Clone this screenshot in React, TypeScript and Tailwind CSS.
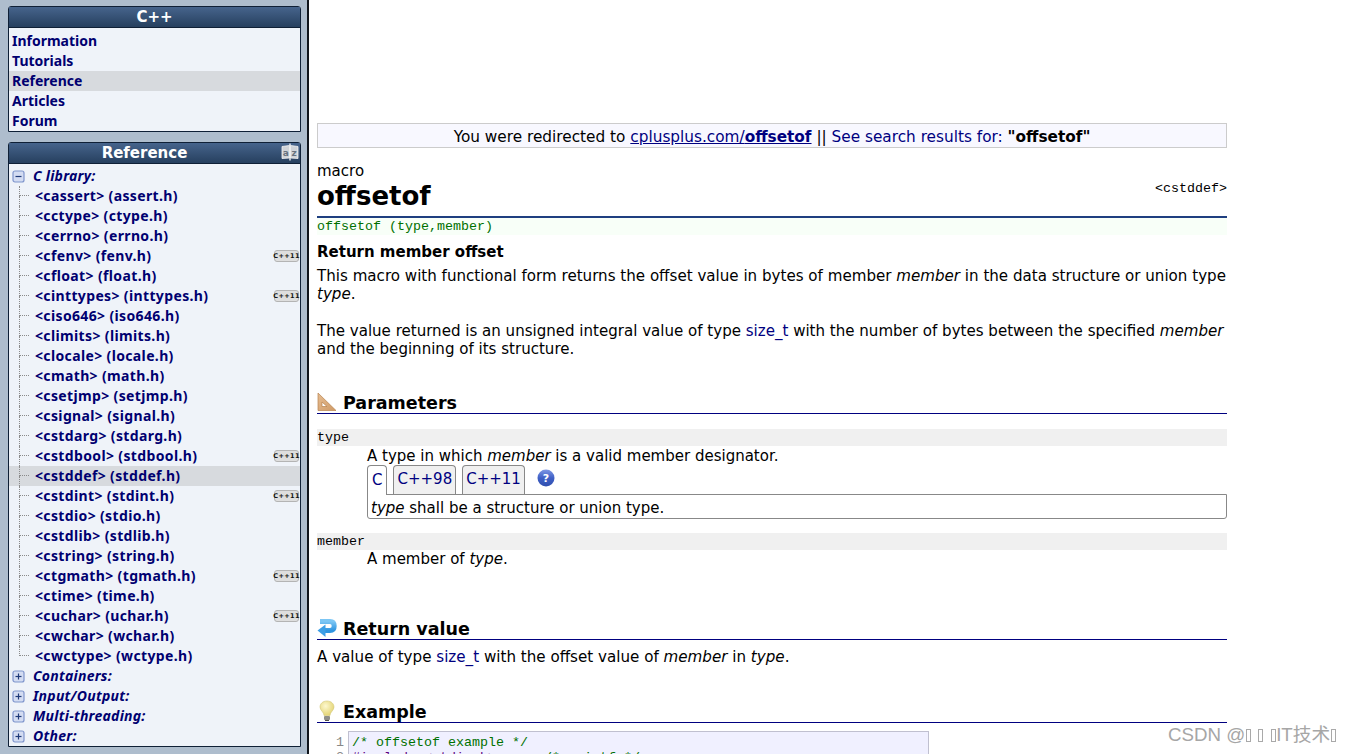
import React from "react";

const libs = [
  ["<cassert> (assert.h)", 0],
  ["<cctype> (ctype.h)", 0],
  ["<cerrno> (errno.h)", 0],
  ["<cfenv> (fenv.h)", 1],
  ["<cfloat> (float.h)", 0],
  ["<cinttypes> (inttypes.h)", 1],
  ["<ciso646> (iso646.h)", 0],
  ["<climits> (limits.h)", 0],
  ["<clocale> (locale.h)", 0],
  ["<cmath> (math.h)", 0],
  ["<csetjmp> (setjmp.h)", 0],
  ["<csignal> (signal.h)", 0],
  ["<cstdarg> (stdarg.h)", 0],
  ["<cstdbool> (stdbool.h)", 1],
  ["<cstddef> (stddef.h)", 0],
  ["<cstdint> (stdint.h)", 1],
  ["<cstdio> (stdio.h)", 0],
  ["<cstdlib> (stdlib.h)", 0],
  ["<cstring> (string.h)", 0],
  ["<ctgmath> (tgmath.h)", 1],
  ["<ctime> (time.h)", 0],
  ["<cuchar> (uchar.h)", 1],
  ["<cwchar> (wchar.h)", 0],
  ["<cwctype> (wctype.h)", 0],
] as const;

const sans = "font-['DejaVu_Sans',sans-serif]";
const side = "font-['Noto_Sans',sans-serif]";
const mono = "font-['Liberation_Mono',monospace]";

function TreeBox({ open }: { open?: boolean }) {
  return (
    <svg width="13" height="13" viewBox="0 0 13 13" className="shrink-0">
      <rect x="1" y="1" width="11" height="11" rx="2" fill="#d3dcf2" stroke="#7f95cc" strokeWidth="1.2" />
      <path d="M3.5 6.5h6" stroke="#1e3a78" strokeWidth="1.2" />
      {!open && <path d="M6.5 3.5v6" stroke="#1e3a78" strokeWidth="1.2" />}
    </svg>
  );
}

function Badge() {
  return (
    <span className="flex h-[12px] w-[25px] items-center justify-center rounded-[3px] border border-[#b4b4b4] bg-[#dedede] font-['DejaVu_Sans',sans-serif] text-[6.5px] leading-none font-bold text-[#111111]">
      C++11
    </span>
  );
}

function Heading({ icon, children, mt }: { icon: React.ReactNode; children: React.ReactNode; mt: string }) {
  return (
    <div className={`flex h-[24px] items-end gap-[6px] border-b border-[#000080] ${mt}`}>
      <span className="flex h-[22px] w-[20px] items-center justify-center">{icon}</span>
      <span className="text-[17.5px] leading-[20px] font-bold text-black">{children}</span>
    </div>
  );
}

function Ruler() {
  return (
    <svg width="20" height="20" viewBox="0 0 20 20">
      <defs>
        <linearGradient id="rg" x1="0" y1="0" x2="1" y2="1">
          <stop offset="0" stopColor="#e6bd92" />
          <stop offset="1" stopColor="#cf9a66" />
        </linearGradient>
      </defs>
      <path d="M1 1 L19 18.5 L1 18.5 Z M5 10 V14.5 H10 Z" fill="url(#rg)" stroke="#b8834e" strokeWidth="0.7" fillRule="evenodd" />
    </svg>
  );
}

function ReturnIcon() {
  return (
    <svg width="20" height="20" viewBox="0 0 20 20">
      <defs>
        <linearGradient id="bg" x1="0" y1="0" x2="0" y2="1">
          <stop offset="0" stopColor="#7cc6f4" />
          <stop offset="1" stopColor="#2f95e0" />
        </linearGradient>
      </defs>
      <path d="M3 3.5 H13 Q17.2 3.5 17.2 8 Q17.2 12.5 13 12.5 H8" fill="none" stroke="url(#bg)" strokeWidth="5" />
      <path d="M0.5 12.5 L8.5 6.5 V19 Z" fill="#3d9fe6" />
    </svg>
  );
}

function Bulb() {
  return (
    <svg width="16" height="22" viewBox="0 0 16 22">
      <defs>
        <radialGradient id="lb" cx="0.4" cy="0.35" r="0.7">
          <stop offset="0" stopColor="#fdf8cf" />
          <stop offset="1" stopColor="#e2d26e" />
        </radialGradient>
      </defs>
      <path d="M8 1 C3.5 1 1 4 1 7 C1 10.5 5 12 5 15.5 H11 C11 12 15 10.5 15 7 C15 4 12.5 1 8 1 Z" fill="url(#lb)" stroke="#d4c779" strokeWidth="0.6" />
      <rect x="5" y="16" width="6" height="4" rx="1" fill="#8f8f88" />
      <path d="M6 20.5h4" stroke="#4f4f4a" strokeWidth="1" />
    </svg>
  );
}

function Help() {
  return (
    <svg width="18" height="18" viewBox="0 0 18 18">
      <defs>
        <linearGradient id="hg" x1="0" y1="0" x2="0" y2="1">
          <stop offset="0" stopColor="#7e97e4" />
          <stop offset="0.5" stopColor="#3f60c6" />
          <stop offset="1" stopColor="#2f4eae" />
        </linearGradient>
      </defs>
      <circle cx="9" cy="9" r="8.5" fill="url(#hg)" />
      <text x="9" y="13" textAnchor="middle" fontSize="11" fontWeight="700" fontFamily="DejaVu Sans" fill="#fff">?</text>
    </svg>
  );
}

function BookAZ() {
  return (
    <svg width="18" height="18" viewBox="0 0 18 18">
      <path d="M9 0.5 V17.5" stroke="#f2f2f2" strokeWidth="1.4" />
      <path d="M1 3.5 L8.5 2.5 V15 L1 15.5 Z M9.5 2.5 L17 3.5 V15.5 L9.5 15 Z" fill="#cfd3d8" stroke="#f4f4f4" strokeWidth="0.8" />
      <text x="4.8" y="12.5" textAnchor="middle" fontSize="9" fontFamily="DejaVu Sans" fill="#66727f">a</text>
      <text x="13.2" y="12.5" textAnchor="middle" fontSize="9" fontFamily="DejaVu Sans" fill="#66727f">z</text>
    </svg>
  );
}

function Tofu({ ml }: { ml: string }) {
  return <span className={`inline-block h-[13px] w-[5px] border border-[#a9a9a9] align-[-1px] ${ml}`} />;
}

export default function App() {
  return (
    <div className={`relative flex h-[754px] w-[1349px] overflow-hidden bg-white text-black ${sans}`}>
      <aside className={`h-full w-[309px] shrink-0 border-r-[2px] border-[#10151c] bg-[#aebdcd] pt-[6px] pr-[6px] pl-[8px] ${side}`}>
        <div className="h-[126px] rounded-t-[3px] border border-[#0f2036] bg-[#eff3f9]">
          <div className={`flex h-[21px] items-center justify-center border-b border-[#0f2036] bg-gradient-to-b from-[#46648c] to-[#27405f] text-[15px] font-bold text-white ${sans}`}>C++</div>
          <div className="pt-[3px] text-[14px] leading-[20px] font-bold text-[#000070]">
            {["Information", "Tutorials", "Reference", "Articles", "Forum"].map((t) => (
              <div key={t} className={`h-[20px] pl-[3px] ${t === "Reference" ? "bg-[#d7dade]" : ""}`}>{t}</div>
            ))}
          </div>
        </div>
        <div className="mt-[10px] h-[605px] rounded-t-[3px] border border-[#0f2036] bg-[#eff3f9]">
          <div className={`relative flex h-[21px] items-center justify-center border-b border-[#0f2036] bg-gradient-to-b from-[#46648c] to-[#27405f] pr-[20px] text-[15px] font-bold text-white ${sans}`}>
            Reference
            <span className="absolute top-[0px] right-[1px]"><BookAZ /></span>
          </div>
          <div className="pt-[2px] text-[14px] leading-[20px] font-bold text-[#000070]">
            <div className="flex h-[20px] items-center gap-[8px] pl-[3px] tracking-[0.25px] italic"><TreeBox open />C library:</div>
            {libs.map(([t, b], i) => (
              <div key={t} className={`flex h-[20px] items-center pr-[1px] pl-[10px] tracking-[0.36px] ${t.startsWith("<cstddef>") ? "bg-[#d7dade]" : ""}`}>
                <span className="flex h-[20px] w-[10px] shrink-0 flex-col">
                  <span className="h-[10px] border-b border-l border-dotted border-[#8a8a8a]" />
                  <span className={`h-[10px] ${i === libs.length - 1 ? "" : "border-l border-dotted border-[#8a8a8a]"}`} />
                </span>
                <span className="ml-[6px] grow">{t}</span>
                {b ? <Badge /> : null}
              </div>
            ))}
            {["Containers:", "Input/Output:", "Multi-threading:", "Other:"].map((t) => (
              <div key={t} className="flex h-[20px] items-center gap-[8px] pl-[3px] tracking-[0.25px] italic"><TreeBox />{t}</div>
            ))}
          </div>
        </div>
      </aside>

      <main className="ml-[8px] w-[910px] shrink-0 pt-[123px] text-[15px] leading-[18px]">
        <div className="flex h-[25px] items-center justify-center border border-[#cccccc] bg-[#f8f8ff] pt-[2px] text-[15.3px]">
          <span>You were redirected to <span className="text-[#000080] underline">cplusplus.com/<b>offsetof</b></span> || <span className="text-[#000080]">See search results for:</span> <b>"offsetof"</b></span>
        </div>
        <div className="mt-[14px] text-[15px] leading-[18px]">macro</div>
        <div className="flex h-[35px] items-start justify-between">
          <h1 className="text-[26px] leading-[32px] font-bold">offsetof</h1>
          <span className={`text-[13.33px] leading-[18px] ${mono}`}>&lt;cstddef&gt;</span>
        </div>
        <div className="mt-[1px] h-[2px] bg-[#1f3f80]" />
        <div className={`h-[17px] bg-[#f8fff8] text-[13.33px] leading-[18px] text-[#007000] ${mono}`}>offsetof (type,member)</div>
        <div className="mt-[8px] font-bold">Return member offset</div>
        <p className="mt-[6px] text-[15.1px] leading-[18px]">This macro with functional form returns the offset value in bytes of member <i>member</i> in the data structure or union type <i>type</i>.</p>
        <p className="mt-[19px] text-[15.05px] leading-[18px]">The value returned is an unsigned integral value of type <span className="text-[#000080]">size_t</span> with the number of bytes between the specified <i>member</i> and the beginning of its structure.</p>

        <Heading mt="mt-[32px]" icon={<Ruler />}>Parameters</Heading>

        <div className={`mt-[15px] h-[17px] bg-[#f0f0f0] text-[13.33px] leading-[18px] ${mono}`}>type</div>
        <div className="pl-[50px]">
          <div className="h-[19px] pt-[1px]">A type in which <i>member</i> is a valid member designator.</div>
          <div className="flex h-[29px] items-end gap-[6px] text-[#000080]">
            <span className="relative z-10 -mb-px flex h-[30px] items-center rounded-t-[4px] border border-b-0 border-[#888888] bg-white px-[4px] pb-[2px]">C</span>
            <span className="flex h-[29px] items-center rounded-t-[4px] border border-b-0 border-[#888888] bg-[#f0f0f0] px-[3px] pb-[2px]">C++98</span>
            <span className="flex h-[29px] items-center rounded-t-[4px] border border-b-0 border-[#888888] bg-[#f0f0f0] px-[3px] pb-[2px]">C++11</span>
            <span className="mb-[7px] ml-[6px]"><Help /></span>
          </div>
          <div className="h-[25px] rounded-b-[3px] border border-[#888888] px-[3px] leading-[26px]"><i>type</i> shall be a structure or union type.</div>
        </div>

        <div className={`mt-[14px] h-[17px] bg-[#f0f0f0] text-[13.33px] leading-[17px] ${mono}`}>member</div>
        <div className="pl-[50px]">A member of <i>type</i>.</div>

        <Heading mt="mt-[48px]" icon={<ReturnIcon />}>Return value</Heading>
        <p className="mt-[8px] text-[15.13px]">A value of type <span className="text-[#000080]">size_t</span> with the offset value of <i>member</i> in <i>type</i>.</p>

        <Heading mt="mt-[33px]" icon={<Bulb />}>Example</Heading>
        <div className="mt-[8px] flex">
          <div className={`w-[31px] pt-[4px] pr-[4px] text-right text-[13.33px] leading-[15px] text-[#888888] ${mono}`}>1<br />2</div>
          <div className={`w-[581px] border border-[#c0c0d0] bg-[#f0f0ff] pt-[3px] pl-[3px] text-[13.33px] leading-[15px] whitespace-pre ${mono}`}>
            <div className="text-[#007000]">/* offsetof example */</div>
            <div className="text-[#600080]">#include &lt;stdio.h&gt;      <span className="text-[#007000]">/* printf */</span></div>
          </div>
        </div>
      </main>

      <div className="absolute top-[723px] left-[1168px] font-['Liberation_Sans','Noto_Sans_CJK_SC',sans-serif] text-[18.7px] leading-[24px] whitespace-nowrap text-[#a6a6a6]">
        CSDN @<Tofu ml="ml-[1px]" /><Tofu ml="ml-[7px]" /><Tofu ml="ml-[8px]" />IT技术<Tofu ml="ml-[1px]" />
      </div>
    </div>
  );
}
